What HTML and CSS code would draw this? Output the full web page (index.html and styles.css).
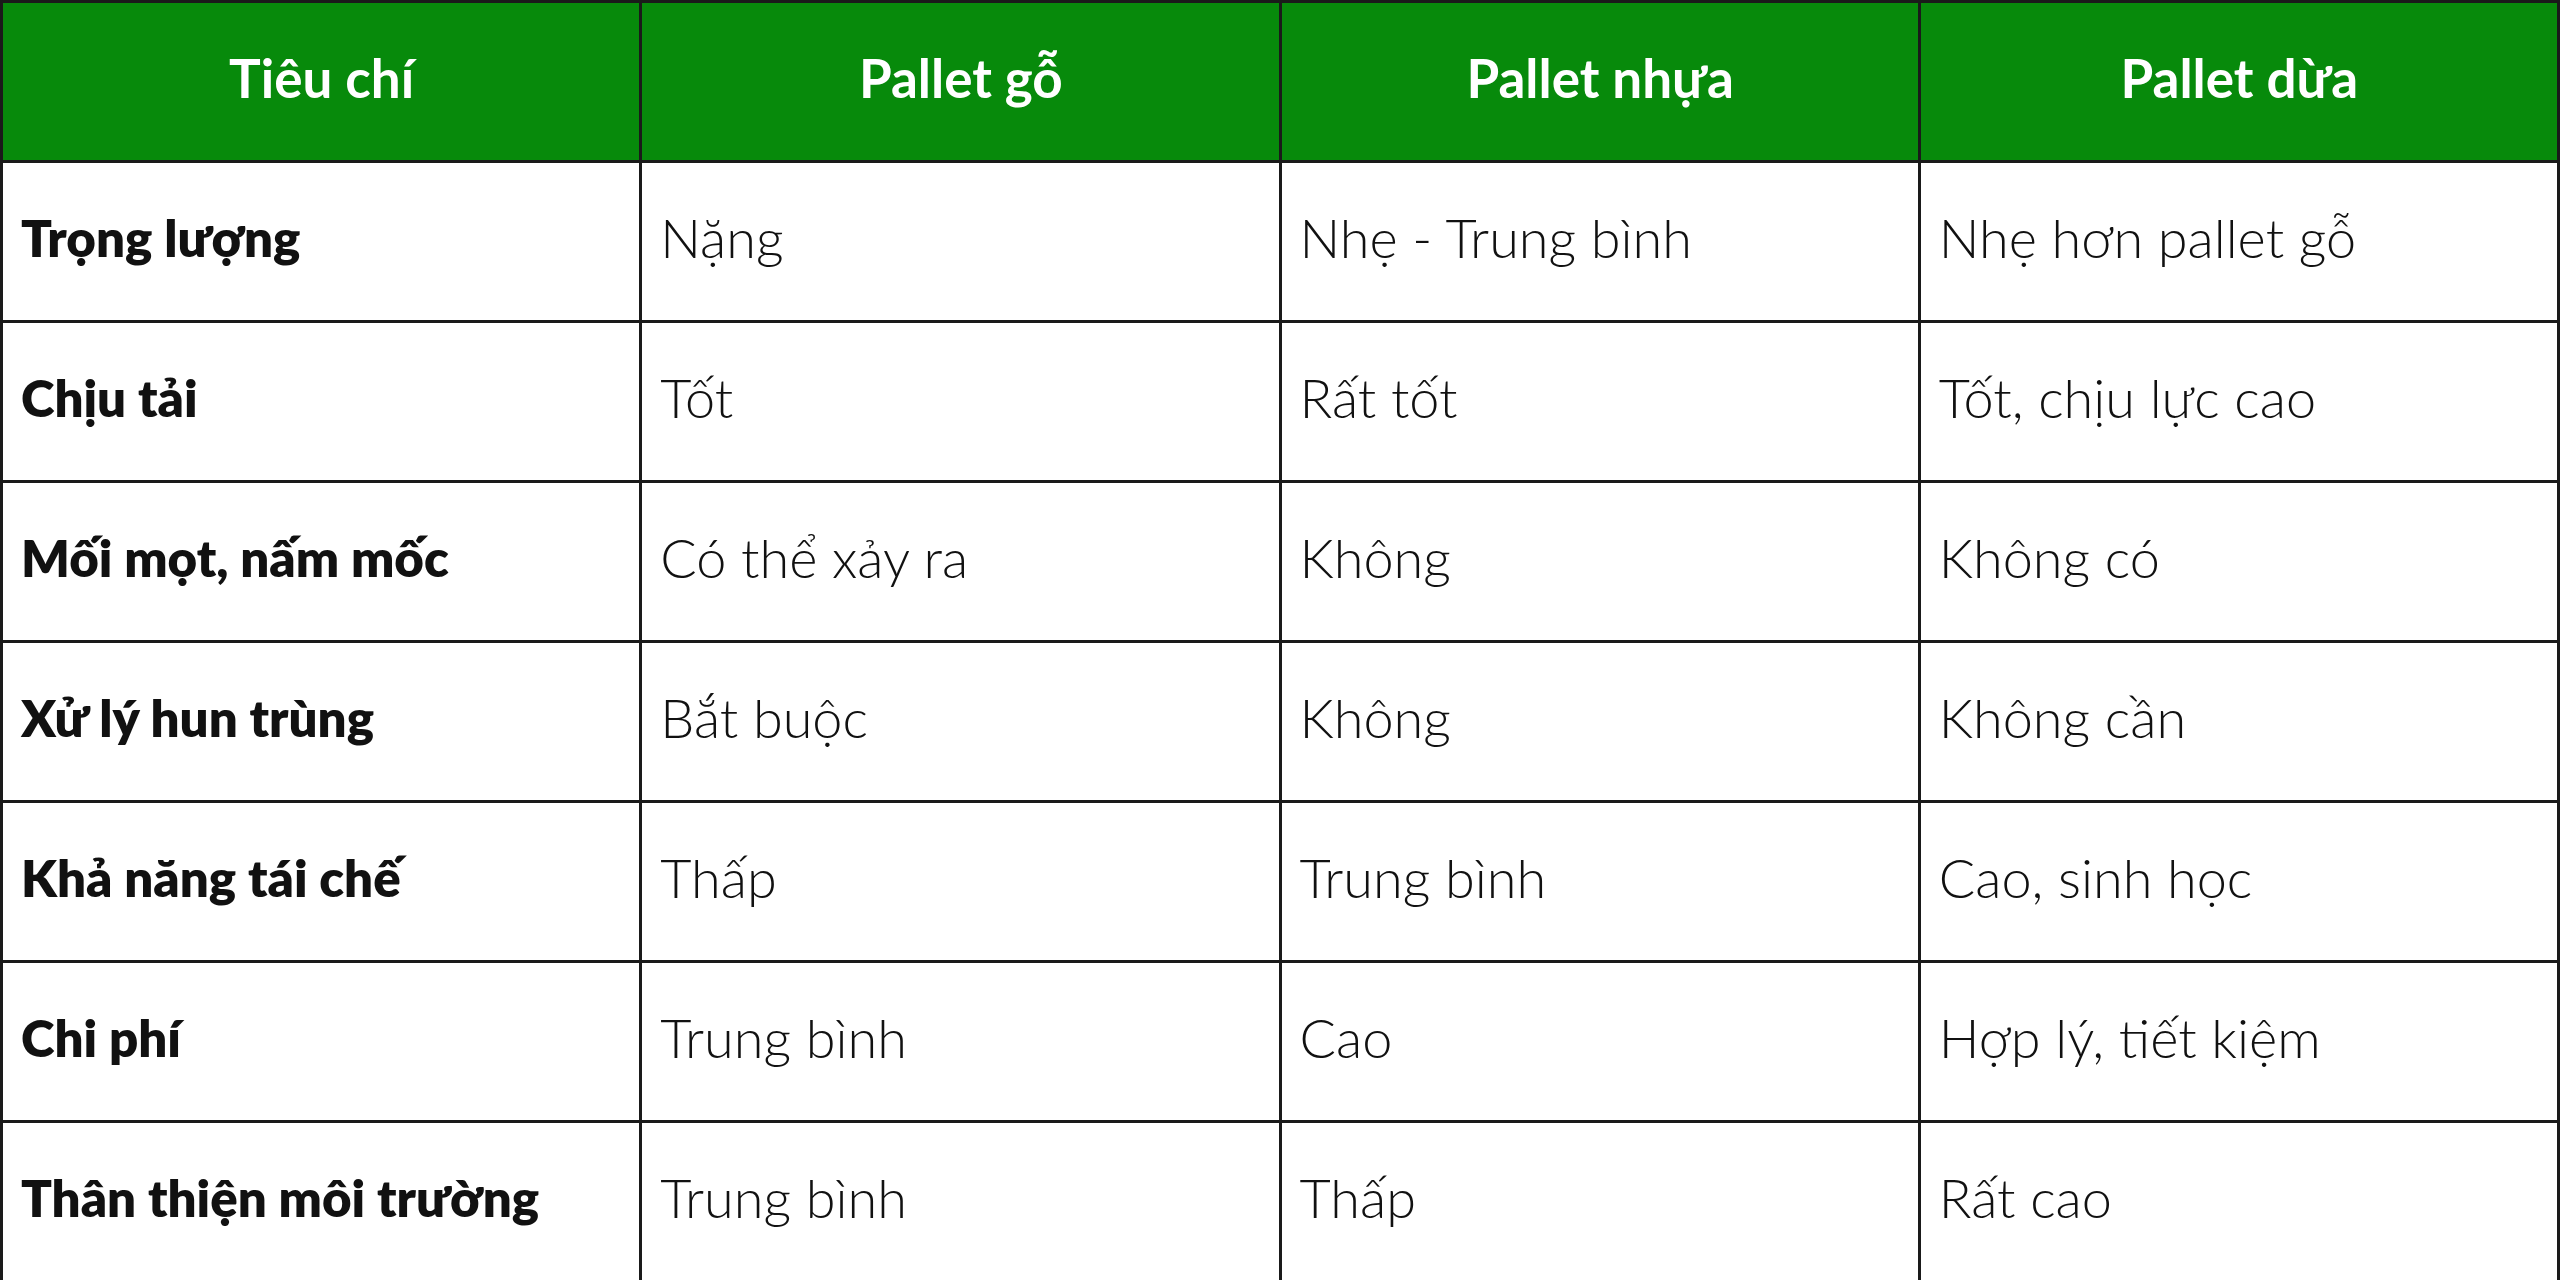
FILE: index.html
```html
<!DOCTYPE html>
<html lang="vi">
<head>
<meta charset="utf-8">
<title>So sánh pallet</title>
<link rel="stylesheet" href="styles.css">
</head>
<body>
<table class="compare">
  <thead>
    <tr>
      <th>Tiêu chí</th>
      <th>Pallet gỗ</th>
      <th>Pallet nhựa</th>
      <th>Pallet dừa</th>
    </tr>
  </thead>
  <tbody>
    <tr><td class="crit">Trọng lượng</td><td>Nặng</td><td>Nhẹ - Trung bình</td><td>Nhẹ hơn pallet gỗ</td></tr>
    <tr><td class="crit">Chịu tải</td><td>Tốt</td><td>Rất tốt</td><td>Tốt, chịu lực cao</td></tr>
    <tr><td class="crit">Mối mọt, nấm mốc</td><td>Có thể xảy ra</td><td>Không</td><td>Không có</td></tr>
    <tr><td class="crit">Xử lý hun trùng</td><td>Bắt buộc</td><td>Không</td><td>Không cần</td></tr>
    <tr><td class="crit">Khả năng tái chế</td><td>Thấp</td><td>Trung bình</td><td>Cao, sinh học</td></tr>
    <tr><td class="crit">Chi phí</td><td>Trung bình</td><td>Cao</td><td>Hợp lý, tiết kiệm</td></tr>
    <tr><td class="crit">Thân thiện môi trường</td><td>Trung bình</td><td>Thấp</td><td>Rất cao</td></tr>
  </tbody>
</table>
</body>
</html>
```
FILE: styles.css
```css
html, body {
  margin: 0;
  padding: 0;
  background: #ffffff;
}
.compare {
  width: 2560px;
  height: 1280px;
  border-collapse: collapse;
  table-layout: fixed;
  font-family: "Lato", "Liberation Sans", sans-serif;
  color: #111111;
}
.compare th,
.compare td {
  border: 3px solid #1a1a1a;
  height: 160px;
  box-sizing: border-box;
  vertical-align: middle;
  padding: 0 17px 8px 18px;
  width: 25%;
}
.compare th {
  background: #078a0b;
  color: #ffffff;
  font-size: 53px;
  font-weight: 700;
  text-align: center;
}
.compare td {
  font-size: 54px;
  font-weight: 300;
  text-align: left;
}
.compare td.crit {
  font-size: 51px;
  font-weight: 800;
}
```
